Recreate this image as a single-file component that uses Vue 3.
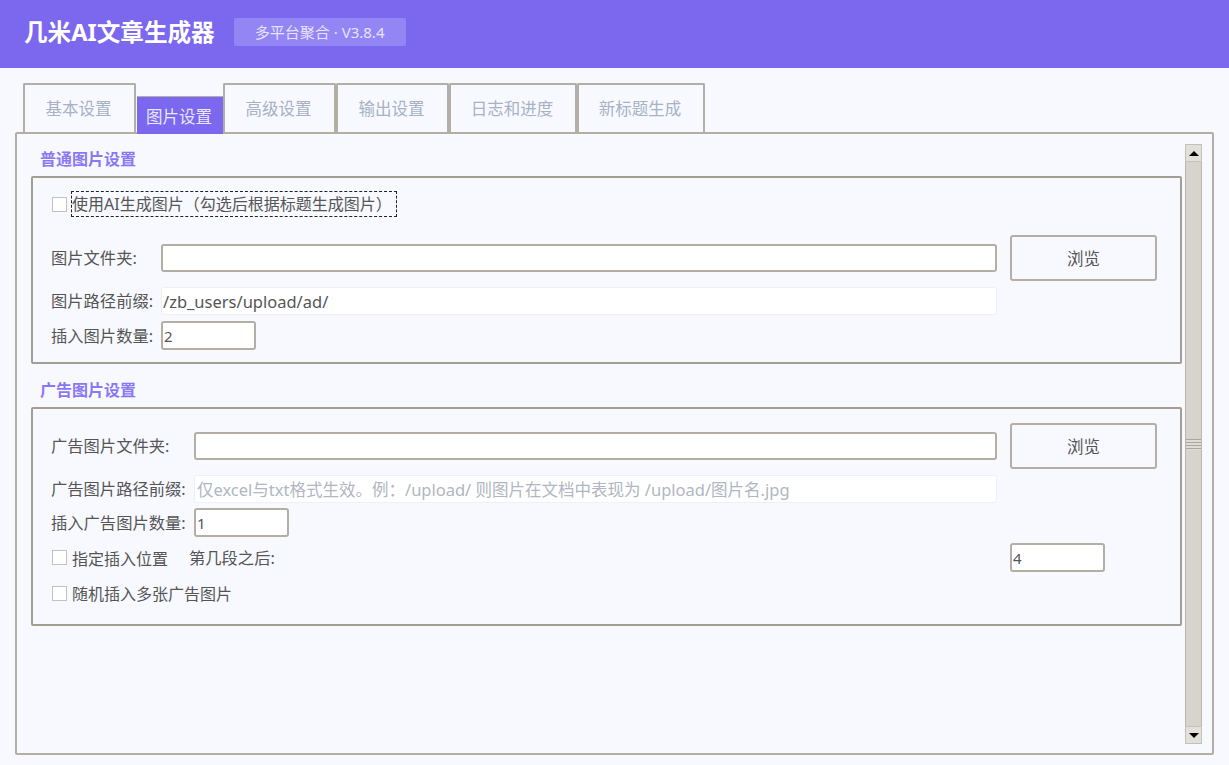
<script setup>
import { ref } from 'vue'

const tabs = ['基本设置', '图片设置', '高级设置', '输出设置', '日志和进度', '新标题生成']
const activeTab = ref('图片设置')
</script>

<template>
  <div class="page">
    <header class="topbar">
      <h1 class="brand">几米AI文章生成器</h1>
      <span class="version">多平台聚合 · V3.8.4</span>
    </header>

    <nav class="tabs">
      <button
        v-for="tab in tabs"
        :key="tab"
        class="tab"
        :class="{ active: tab === activeTab, wide: tab.length === 5 }"
        @click="activeTab = tab"
      >{{ tab }}</button>
    </nav>

    <main class="panel">
      <div class="content">
        <h2 class="group-title first">普通图片设置</h2>
        <section class="group normal">
          <label class="check-row top">
            <input type="checkbox" class="check" />
            <span class="focus-text">使用AI生成图片（勾选后根据标题生成图片）</span>
          </label>

          <div class="form-grid short">
            <span class="label">图片文件夹:</span>
            <input class="field" />
            <button class="browse">浏览</button>

            <span class="label">图片路径前缀:</span>
            <input class="field flat" value="/zb_users/upload/ad/" />
            <span></span>

            <span class="label">插入图片数量:</span>
            <input class="field spin" value="2" />
          </div>
        </section>

        <h2 class="group-title">广告图片设置</h2>
        <section class="group ads">
          <div class="form-grid long">
            <span class="label">广告图片文件夹:</span>
            <input class="field" />
            <button class="browse">浏览</button>

            <span class="label">广告图片路径前缀:</span>
            <input class="field flat" placeholder="仅excel与txt格式生效。例：/upload/ 则图片在文档中表现为 /upload/图片名.jpg" />
            <span></span>

            <span class="label">插入广告图片数量:</span>
            <input class="field spin" value="1" />
          </div>

          <div class="position-row">
            <label class="check-row">
              <input type="checkbox" class="check" />
              <span>指定插入位置</span>
            </label>
            <span class="label after">第几段之后:</span>
            <input class="field spin push" value="4" />
          </div>

          <label class="check-row random">
            <input type="checkbox" class="check" />
            <span>随机插入多张广告图片</span>
          </label>
        </section>
      </div>

      <div class="scrollbar">
        <div class="arrow up"></div>
        <div class="thumb">
          <div class="grip"></div>
        </div>
        <div class="arrow down"></div>
      </div>
    </main>
  </div>
</template>

<style>
html, body {
  margin: 0;
  background: #f8f9ff;
}
</style>

<style scoped>
.page {
  height: 765px;
  overflow: hidden;
  background: #f8f9ff;
  color: #555;
  font-family: "Noto Sans", "Noto Sans CJK SC", sans-serif;
  font-size: 16px;
}

.topbar {
  height: 68px;
  box-sizing: border-box;
  padding: 0 0 4px 24px;
  display: flex;
  align-items: center;
  gap: 19px;
  background: #7b68ee;
  color: #fff;
}

.brand {
  margin: 0;
  font-size: 23.6px;
  font-weight: 700;
  line-height: 32px;
}

.version {
  width: 172px;
  height: 28px;
  line-height: 28px;
  text-align: center;
  font-size: 15px;
  color: #e6e2ff;
  background: #9485f4;
  border-radius: 2px;
}

.tabs {
  height: 64px;
  box-sizing: border-box;
  padding: 15px 0 0 23px;
  display: flex;
  align-items: flex-end;
}

.tab {
  width: 113px;
  height: 49px;
  box-sizing: border-box;
  margin: 0;
  padding: 0 2px 2px 0;
  border: 2px solid #b3afa5;
  border-bottom: 0;
  border-radius: 2px 2px 0 0;
  background: #f8f9ff;
  color: #a7b2c4;
  font: inherit;
  font-size: 16.5px;
}

.tab.wide {
  width: 128px;
}

.tab.active {
  width: 86px;
  height: 38px;
  margin: 0 0 -2px 1px;
  padding: 0 2px 0 0;
  border: 0;
  border-top: 1px solid #b3afa5;
  border-radius: 0;
  background: #7b68ee;
  color: #e9e6ff;
  position: relative;
  z-index: 1;
}

.panel {
  height: 623px;
  box-sizing: border-box;
  margin: 0 15px;
  padding-top: 10px;
  border: 2px solid #b3afa5;
  border-radius: 2px;
  display: flex;
}

.content {
  flex: 1;
  min-width: 0;
  padding: 0 3px 0 14px;
}

.group-title {
  margin: 0;
  height: 28px;
  padding: 0 0 5px 9px;
  box-sizing: border-box;
  font-size: 16px;
  line-height: 23px;
  font-weight: 700;
  color: #8a78f2;
}

.group-title.first {
  margin-top: 4px;
}

.group {
  box-sizing: border-box;
  padding-left: 18px;
  border: 2px solid #a29e93;
  border-radius: 2px;
}

.group.normal {
  height: 188px;
  padding-top: 13px;
  margin-bottom: 15px;
}

.group.ads {
  height: 219px;
  padding-top: 14px;
}

.check-row {
  display: flex;
  align-items: center;
  gap: 5px;
  padding-left: 1px;
  height: 26px;
  white-space: nowrap;
}

.check {
  appearance: none;
  width: 15px;
  height: 15px;
  margin: 0;
  flex: none;
  box-sizing: border-box;
  background: #fff;
  border: 1px solid #c4c2bb;
}

.focus-text {
  margin-left: -1px;
  height: 26px;
  line-height: 24px;
  box-sizing: border-box;
  padding: 0 4px 0 0;
  border: 1px dashed #222;
}

.form-grid {
  display: grid;
  column-gap: 13px;
  row-gap: 6px;
  align-items: center;
  justify-items: start;
}

.form-grid.short {
  margin-top: 18px;
  grid-template-columns: 97px 836px 147px;
}

.form-grid.long {
  row-gap: 5px;
  grid-template-columns: 130px 803px 147px;
}

.form-grid.long .flat {
  margin-top: 1px;
}

.label {
  white-space: nowrap;
  font-size: 16.3px;
  line-height: 20px;
}

.field {
  box-sizing: border-box;
  width: 100%;
  height: 28px;
  padding: 0 3px;
  border: 2px solid #b3afa5;
  border-radius: 3px;
  outline: none;
  background: #fff;
  color: #555;
  font: inherit;
  font-size: 16.5px;
}

.field.flat {
  border: 1px solid #eef0f6;
  padding-left: 1px;
}

.field.flat::placeholder {
  color: #b0b6c2;
  opacity: 1;
}

.form-grid.long .flat {
  padding-left: 2px;
}

.field.spin {
  width: 95px;
  height: 29px;
  padding: 0 2px 0 1px;
  font-size: 15px;
}

.browse {
  width: 147px;
  height: 46px;
  box-sizing: border-box;
  padding: 0;
  border: 2px solid #b3afa5;
  border-radius: 3px;
  background: #f8f9ff;
  color: #555;
  font: inherit;
  font-size: 16.5px;
}

.position-row {
  margin-top: 6px;
  padding-right: 75px;
  display: flex;
  align-items: center;
}

.after {
  margin-left: 21px;
}

.field.push {
  margin-left: auto;
}

.check-row.random {
  margin-top: 8px;
}

.scrollbar {
  width: 17px;
  height: 600px;
  flex: none;
  margin-right: 10px;
  display: flex;
  flex-direction: column;
  background: #d6d4cd;
}

.arrow {
  height: 18px;
  flex: none;
  box-sizing: border-box;
  background: #e2e0da;
  border: 1px solid #c4c1b9;
  display: flex;
  align-items: center;
  justify-content: center;
}

.arrow::before {
  content: '';
  width: 0;
  height: 0;
  border-left: 5px solid transparent;
  border-right: 5px solid transparent;
}

.arrow.up::before {
  border-bottom: 5px solid #000;
}

.arrow.down::before {
  border-top: 5px solid #000;
}

.thumb {
  flex: 1;
  box-sizing: border-box;
  border-left: 1px solid #bab7ae;
  border-right: 1px solid #bab7ae;
  display: flex;
  align-items: center;
  justify-content: center;
}

.grip {
  width: 15px;
  height: 11px;
  background: repeating-linear-gradient(#a9a69d 0 1px, #dedcd6 1px 3px);
}
</style>
